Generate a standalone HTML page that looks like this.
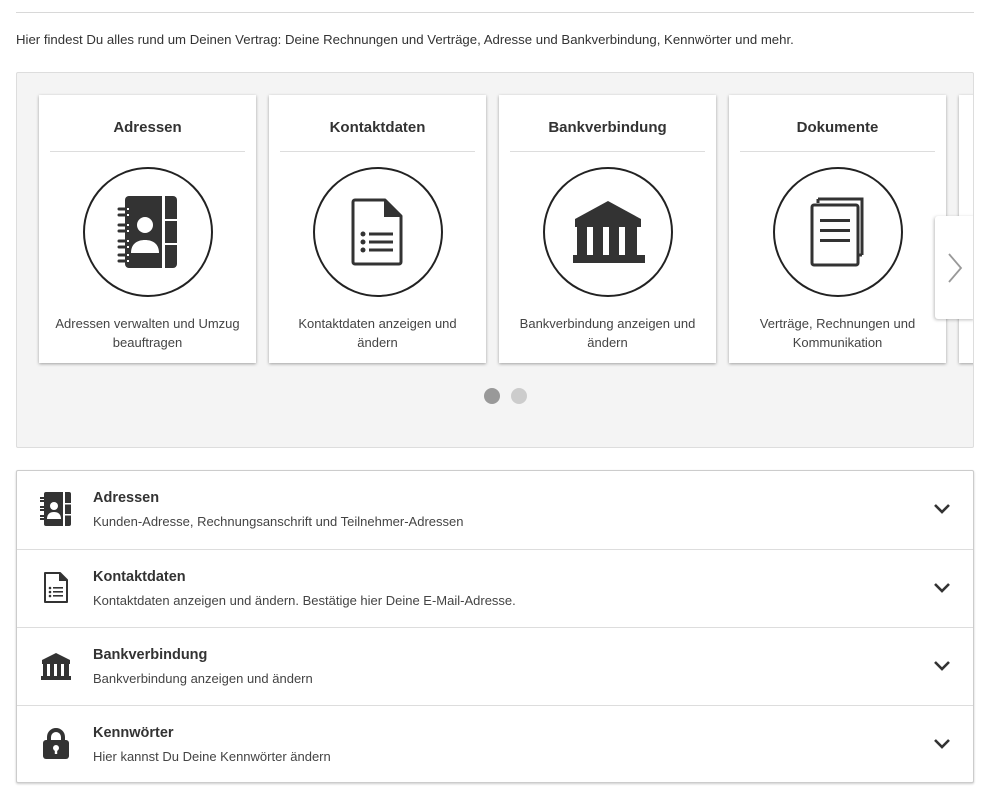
<!DOCTYPE html>
<html><head><meta charset="utf-8"><style>
*{margin:0;padding:0;box-sizing:border-box}
body{width:999px;height:787px;background:#fff;font-family:"Liberation Sans",sans-serif;color:#333;position:relative;overflow:hidden}
.hr{position:absolute;left:16px;top:12px;width:958px;height:1px;background:#d8d8d8}
.intro{position:absolute;left:16px;top:32px;font-size:13.2px;color:#333}
.gray{position:absolute;left:16px;top:72px;width:958px;height:376px;background:#f4f4f4;border:1px solid #ddd;border-radius:2px;overflow:hidden}
.card{position:absolute;top:22px;width:217px;height:268px;background:#fff;box-shadow:0 1px 3px rgba(0,0,0,.35);text-align:center}
.card h3{font-size:15px;font-weight:bold;color:#333;margin-top:24px;height:20px}
.card .sep{margin:12px auto 0;width:195px;height:1px;background:#ddd}
.card .circ{width:130px;height:130px;border:2px solid #222;border-radius:50%;margin:15px auto 0;display:flex;align-items:center;justify-content:center}
.card p{font-size:13px;line-height:19px;color:#444;margin-top:17px;padding:0 10px}
.arrow{position:absolute;left:918px;top:143px;width:40px;height:103px;background:#fff;box-shadow:-1px 1px 3px rgba(0,0,0,.25);border-radius:3px 0 0 3px}
.dot{position:absolute;top:315px;width:16px;height:16px;border-radius:50%}
.list{position:absolute;left:16px;top:470px;width:958px;height:313px;border:1px solid #ccc;border-radius:2px;box-shadow:0 1px 2px rgba(0,0,0,.2);background:#fff}
.row{position:absolute;left:0;width:956px;height:78px;border-top:1px solid #ddd}
.row .ic{position:absolute;left:22px;top:20px;width:34px;height:36px;display:flex;align-items:center;justify-content:center}
.row h4{position:absolute;left:76px;top:19px;font-size:14.5px;font-weight:bold;color:#333}
.row span{position:absolute;left:76px;top:43px;font-size:13px;color:#444}
.row .ch{position:absolute;left:916px;top:32px}
</style></head><body>
<div class="hr"></div>
<div class="intro">Hier findest Du alles rund um Deinen Vertrag: Deine Rechnungen und Verträge, Adresse und Bankverbindung, Kennwörter und mehr.</div>
<div class="gray">
 <div class="card" style="left:22px"><h3>Adressen</h3><div class="sep"></div><div class="circ">
  <svg width="62" height="74" viewBox="0 0 62 74"><rect x="8" y="1" width="52" height="72" rx="4" fill="#333"/><rect x="45" y="1" width="3" height="72" fill="#fff"/><rect x="48" y="24" width="12" height="2" fill="#fff"/><rect x="48" y="48" width="12" height="2" fill="#fff"/>
  <g fill="none" stroke="#333" stroke-width="3" stroke-linecap="round"><path d="M2 14h8M2 20h8"/><path d="M2 30h8M2 36h8"/><path d="M2 46h8M2 52h8"/><path d="M2 60h8M2 66h8"/></g>
  <g stroke="#fff" stroke-width="2" fill="none"><path d="M10 14h2M10 20h2M10 30h2M10 36h2M10 46h2M10 52h2M10 60h2M10 66h2"/></g>
  <circle cx="28" cy="30" r="8" fill="#fff"/><path d="M14 58c0-9 6-13 14-13s14 4 14 13z" fill="#fff"/></svg></div><p>Adressen verwalten und Umzug beauftragen</p></div>
 <div class="card" style="left:252px"><h3>Kontaktdaten</h3><div class="sep"></div><div class="circ">
  <svg width="54" height="68" viewBox="0 0 54 68"><path d="M4 2h30l16 16v46a2 2 0 0 1-2 2H4a2 2 0 0 1-2-2V4a2 2 0 0 1 2-2z" fill="none" stroke="#333" stroke-width="3" stroke-linejoin="round"/><path d="M33 2v17h17z" fill="#333"/><g fill="#333"><circle cx="12" cy="36" r="2.5"/><circle cx="12" cy="44" r="2.5"/><circle cx="12" cy="52" r="2.5"/><rect x="18" y="34.5" width="24" height="3"/><rect x="18" y="42.5" width="24" height="3"/><rect x="18" y="50.5" width="24" height="3"/></g></svg></div><p>Kontaktdaten anzeigen und ändern</p></div>
 <div class="card" style="left:482px"><h3>Bankverbindung</h3><div class="sep"></div><div class="circ">
  <svg width="74" height="66" viewBox="0 0 74 66"><path d="M37 2L4 20v8h66v-8z" fill="#333"/><g fill="#333"><rect x="6" y="28" width="10" height="28"/><rect x="22" y="28" width="10" height="28"/><rect x="38" y="28" width="10" height="28"/><rect x="54" y="28" width="12" height="28"/><rect x="2" y="56" width="72" height="8"/></g></svg></div><p>Bankverbindung anzeigen und ändern</p></div>
 <div class="card" style="left:712px"><h3>Dokumente</h3><div class="sep"></div><div class="circ">
  <svg width="56" height="70" viewBox="0 0 56 70"><path d="M8 2h44v56" fill="none" stroke="#333" stroke-width="3"/><path d="M8 2v4M52 58h-4" stroke="#333" stroke-width="3"/><rect x="2" y="8" width="46" height="60" rx="2" fill="#fff" stroke="#333" stroke-width="3"/><g fill="#333"><rect x="10" y="22" width="30" height="3"/><rect x="10" y="32" width="30" height="3"/><rect x="10" y="42" width="30" height="3"/></g></svg></div><p>Verträge, Rechnungen und Kommunikation</p></div>
 <div class="card" style="left:942px"></div>
 <div class="arrow"><svg width="40" height="103" viewBox="0 0 40 103"><path d="M14 38l12 14-12 14" fill="none" stroke="#999" stroke-width="1.8"/></svg></div>
 <div class="dot" style="left:467px;background:#999"></div>
 <div class="dot" style="left:494px;background:#ccc"></div>
</div>
<div class="list">
 <div class="row" style="top:0;border-top:none"><div class="ic"><svg width="32" height="36" viewBox="0 0 32 36"><rect x="4" y="1" width="27" height="34" rx="2" fill="#333"/><rect x="23" y="1" width="2" height="34" fill="#fff"/><rect x="25" y="12" width="6" height="1.5" fill="#fff"/><rect x="25" y="23" width="6" height="1.5" fill="#fff"/><g stroke="#333" stroke-width="2"><path d="M0 7h6M0 10h6M0 16h6M0 19h6M0 25h6M0 28h6"/></g><circle cx="14" cy="15" r="4" fill="#fff"/><path d="M7 28c0-5 3-7 7-7s7 2 7 7z" fill="#fff"/></svg></div><h4>Adressen</h4><span>Kunden-Adresse, Rechnungsanschrift und Teilnehmer-Adressen</span><svg class="ch" width="18" height="12" viewBox="0 0 18 12"><path d="M2 2l7 7 7-7" fill="none" stroke="#333" stroke-width="2.6"/></svg></div>
 <div class="row" style="top:78px"><div class="ic"><svg width="26" height="32" viewBox="0 0 26 32"><path d="M2 1h15l7 7v22H2z" fill="none" stroke="#333" stroke-width="2" stroke-linejoin="round"/><path d="M16 1v8h8z" fill="#333"/><g fill="#333"><circle cx="7" cy="16" r="1.3"/><circle cx="7" cy="20" r="1.3"/><circle cx="7" cy="24" r="1.3"/><rect x="10" y="15" width="10" height="1.6"/><rect x="10" y="19" width="10" height="1.6"/><rect x="10" y="23" width="10" height="1.6"/></g></svg></div><h4>Kontaktdaten</h4><span>Kontaktdaten anzeigen und ändern. Bestätige hier Deine E-Mail-Adresse.</span><svg class="ch" width="18" height="12" viewBox="0 0 18 12"><path d="M2 2l7 7 7-7" fill="none" stroke="#333" stroke-width="2.6"/></svg></div>
 <div class="row" style="top:156px"><div class="ic"><svg width="32" height="28" viewBox="0 0 32 28"><path d="M16 1L2 8v4h28V8z" fill="#333"/><g fill="#333"><rect x="3" y="12" width="4" height="12"/><rect x="10" y="12" width="4" height="12"/><rect x="17" y="12" width="4" height="12"/><rect x="24" y="12" width="5" height="12"/><rect x="1" y="24" width="30" height="4"/></g></svg></div><h4>Bankverbindung</h4><span>Bankverbindung anzeigen und ändern</span><svg class="ch" width="18" height="12" viewBox="0 0 18 12"><path d="M2 2l7 7 7-7" fill="none" stroke="#333" stroke-width="2.6"/></svg></div>
 <div class="row" style="top:234px"><div class="ic"><svg width="30" height="32" viewBox="0 0 30 32"><path d="M8 13V9a7 7 0 0 1 14 0v4" fill="none" stroke="#333" stroke-width="4"/><rect x="2" y="12" width="26" height="19" rx="3" fill="#333"/><circle cx="15" cy="20" r="3" fill="#fff"/><rect x="13.8" y="20" width="2.4" height="6" fill="#fff"/></svg></div><h4>Kennwörter</h4><span>Hier kannst Du Deine Kennwörter ändern</span><svg class="ch" width="18" height="12" viewBox="0 0 18 12"><path d="M2 2l7 7 7-7" fill="none" stroke="#333" stroke-width="2.6"/></svg></div>
</div>
</body></html>
